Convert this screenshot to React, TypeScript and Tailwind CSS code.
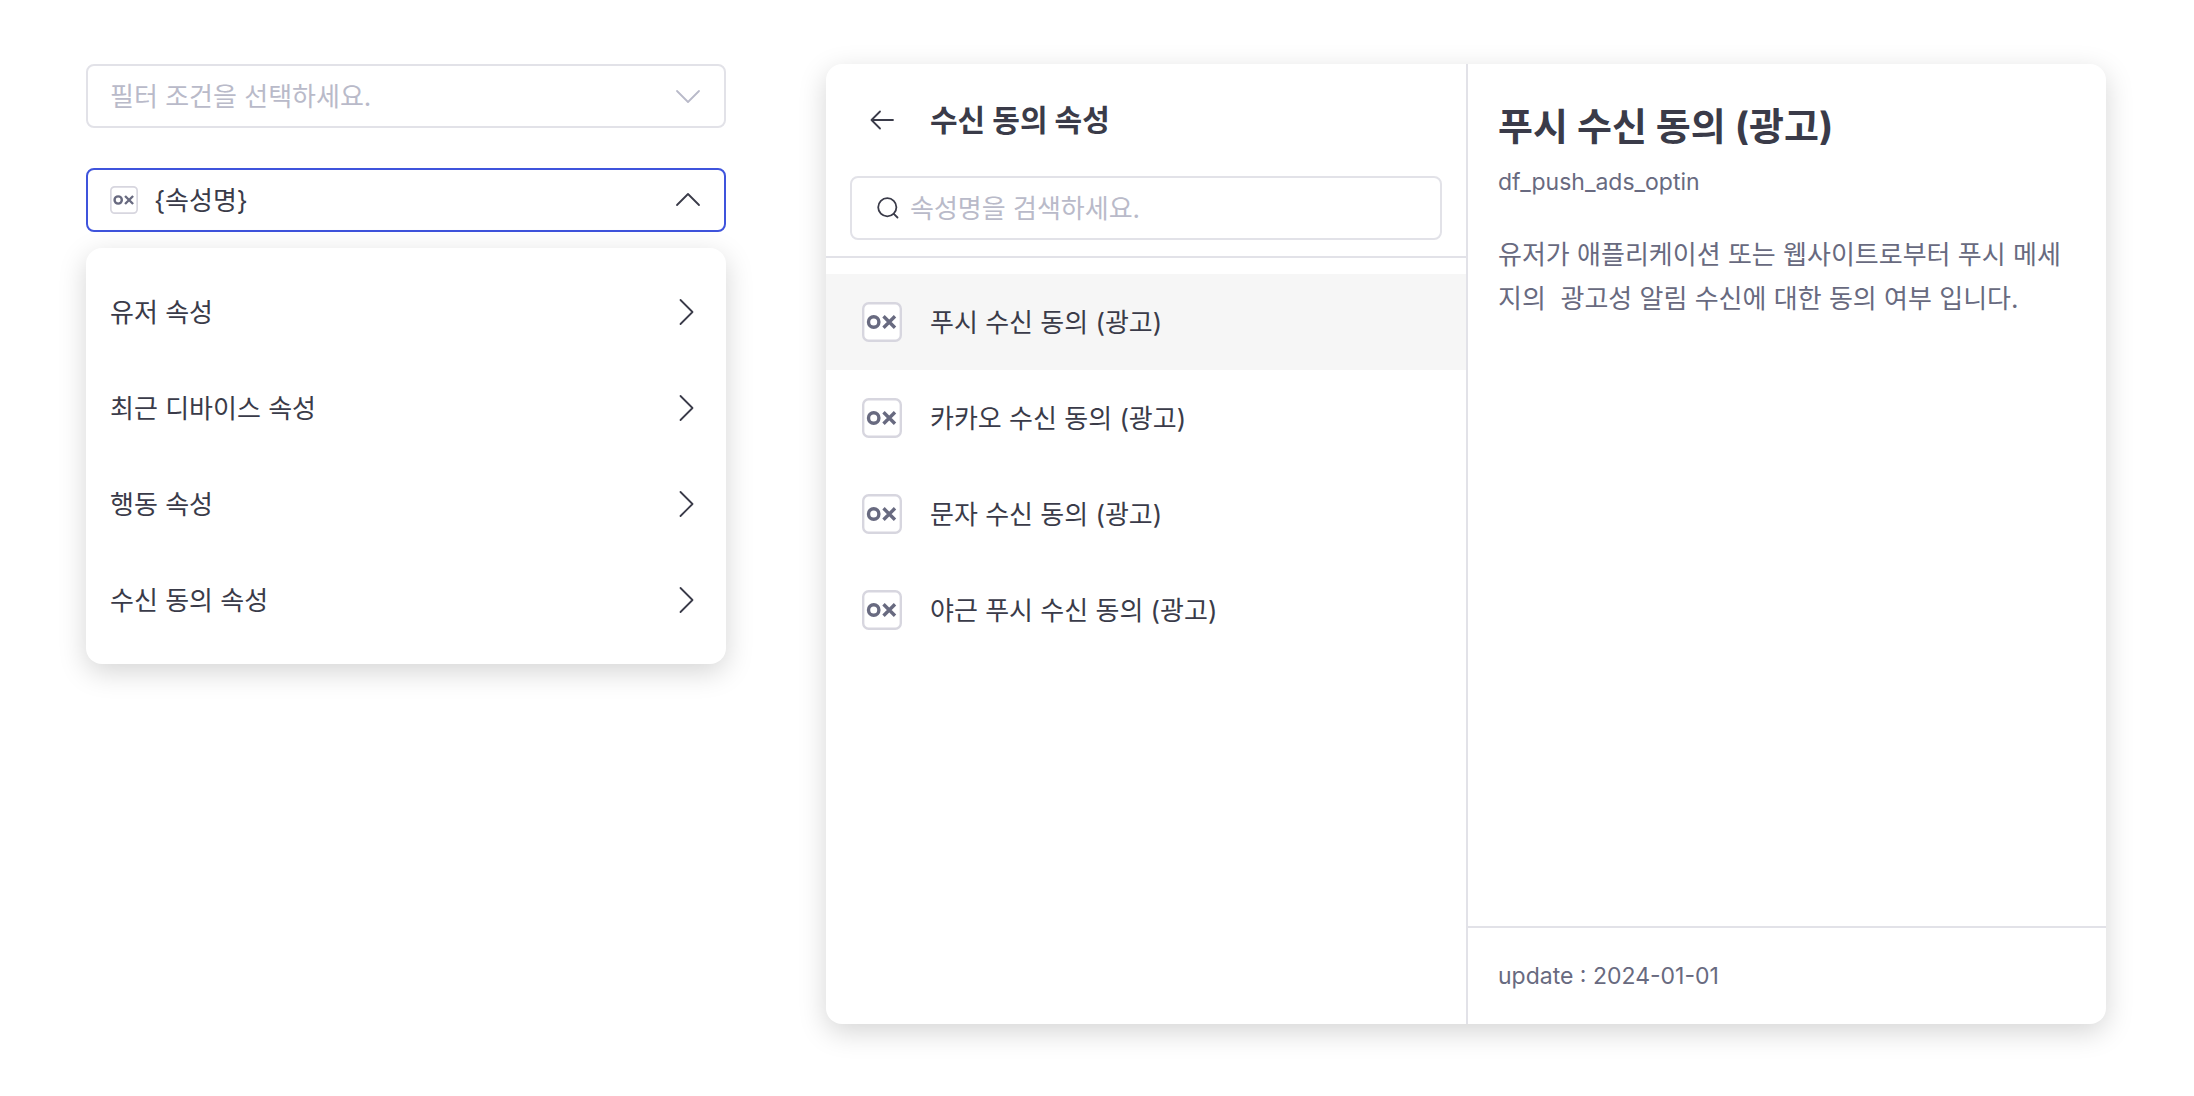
import { useState } from "react";

const groups = ["유저 속성", "최근 디바이스 속성", "행동 속성", "수신 동의 속성"];

const attributes = [
  "푸시 수신 동의 (광고)",
  "카카오 수신 동의 (광고)",
  "문자 수신 동의 (광고)",
  "야근 푸시 수신 동의 (광고)",
];

const description =
  "유저가 애플리케이션 또는 웹사이트로부터 푸시 메세지의  광고성 알림 수신에 대한 동의 여부 입니다.";

function BooleanIcon({ className }: { className: string }) {
  return (
    <svg viewBox="0 0 40 40" fill="none" aria-hidden="true" className={className}>
      <rect x="1.2" y="1.2" width="37.6" height="37.6" rx="5.5" fill="#fff" stroke="#d7d6df" strokeWidth="2.4" />
      <circle cx="11.7" cy="20" r="5.2" stroke="#686a80" strokeWidth="3.4" />
      <path d="M21.5 14.3L33 25.7M33 14.3L21.5 25.7" stroke="#686a80" strokeWidth="3.4" />
    </svg>
  );
}

function Icon({ d, className }: { d: string; className: string }) {
  return (
    <svg
      viewBox="0 0 32 32"
      fill="none"
      stroke="currentColor"
      strokeWidth="1.8"
      strokeLinecap="round"
      strokeLinejoin="round"
      aria-hidden="true"
      className={className}
    >
      <path d={d} />
    </svg>
  );
}

function FilterFields() {
  return (
    <section className="flex flex-col">
      <div className="relative">
        <select
          aria-label="필터 조건"
          defaultValue=""
          className="block h-16 w-full appearance-none rounded-lg border-2 border-[#e2e2e8] bg-white px-[22px] text-[#b9bac9] outline-none"
        >
          <option value="">필터 조건을 선택하세요.</option>
          {groups.map((group) => (
            <option key={group}>{group}</option>
          ))}
        </select>
        <Icon
          d="M5 11L16 22L27 11"
          className="pointer-events-none absolute top-4 right-[22px] size-8 text-[#b9bac9]"
        />
      </div>

      <button
        type="button"
        aria-expanded="true"
        aria-haspopup="menu"
        className="mt-10 flex h-16 w-full items-center gap-4 rounded-lg border-2 border-[#3f54dc] bg-white pr-5 pl-[22px] text-left"
      >
        <BooleanIcon className="size-7 shrink-0" />
        <span className="grow">{"{속성명}"}</span>
        <Icon d="M5 21L16 10L27 21" className="size-8 shrink-0" />
      </button>

      <ul className="mt-4 rounded-2xl bg-white py-4 shadow-[0_8px_28px_rgba(0,0,0,0.17)]">
        {groups.map((group) => (
          <li key={group}>
            <button type="button" className="flex h-24 w-full items-center justify-between px-6 text-left">
              {group}
              <Icon d="M10.5 4L22.5 16L10.5 28" className="size-8 shrink-0" />
            </button>
          </li>
        ))}
      </ul>
    </section>
  );
}

function AttributePanel() {
  const [selected, setSelected] = useState(attributes[0]);

  return (
    <section className="grid min-h-[calc(100vh-136px)] grid-cols-2 overflow-hidden rounded-2xl bg-white shadow-[0_8px_28px_rgba(0,0,0,0.17)]">
      <div>
        <header className="flex h-28 items-center gap-7 px-9">
          <button type="button" aria-label="뒤로" className="flex size-10 items-center justify-center">
            <Icon d="M27 16H5.5M14 7.5L5.5 16L14 24.5" className="size-8" />
          </button>
          <h2 className="text-[30px] font-bold">수신 동의 속성</h2>
        </header>
        <div className="border-b-2 border-[#e2e2e8] px-6 pb-4">
          <label className="flex h-16 items-center gap-1.5 rounded-lg border-2 border-[#e2e2e8] px-5">
            <svg
              viewBox="0 0 32 32"
              fill="none"
              stroke="currentColor"
              strokeWidth="1.8"
              strokeLinecap="round"
              aria-hidden="true"
              className="size-8 shrink-0"
            >
              <circle cx="15.3" cy="15.3" r="9.1" />
              <path d="M21.8 21.8L25.5 25.5" />
            </svg>
            <input
              type="text"
              aria-label="속성명 검색"
              placeholder="속성명을 검색하세요."
              className="w-full min-w-0 bg-transparent outline-none placeholder:text-[#b9bac9]"
            />
          </label>
        </div>
        <ul className="py-4">
          {attributes.map((name) => (
            <li key={name}>
              <button
                type="button"
                aria-pressed={name === selected}
                onClick={() => setSelected(name)}
                className="flex h-24 w-full items-center gap-7 px-9 text-left aria-pressed:bg-[#f6f6f6]"
              >
                <BooleanIcon className="size-10 shrink-0" />
                {name}
              </button>
            </li>
          ))}
        </ul>
      </div>

      <div className="flex flex-col border-l-2 border-[#e2e2e8] text-[#686a80]">
        <div className="grow px-[30px] pt-[34px]">
          <h1 className="text-[38px] leading-[56px] font-bold text-[#3a3b49]">{selected}</h1>
          <p className="mt-2.5 text-[23px] leading-9">df_push_ads_optin</p>
          <p className="mt-[33px] leading-[44px] break-all whitespace-pre-wrap">{description}</p>
        </div>
        <footer className="flex h-[98px] items-center border-t-2 border-[#e2e2e8] px-[30px] text-[23px]">
          update : 2024-01-01
        </footer>
      </div>
    </section>
  );
}

export default function App() {
  return (
    <main className="grid min-h-screen grid-cols-[1fr_2fr] items-start gap-[100px] bg-white pt-16 pr-[88px] pb-[72px] pl-[86px] font-['Inter','Noto_Sans_CJK_KR',sans-serif] text-[26px] text-[#3a3b49]">
      <FilterFields />
      <AttributePanel />
    </main>
  );
}
